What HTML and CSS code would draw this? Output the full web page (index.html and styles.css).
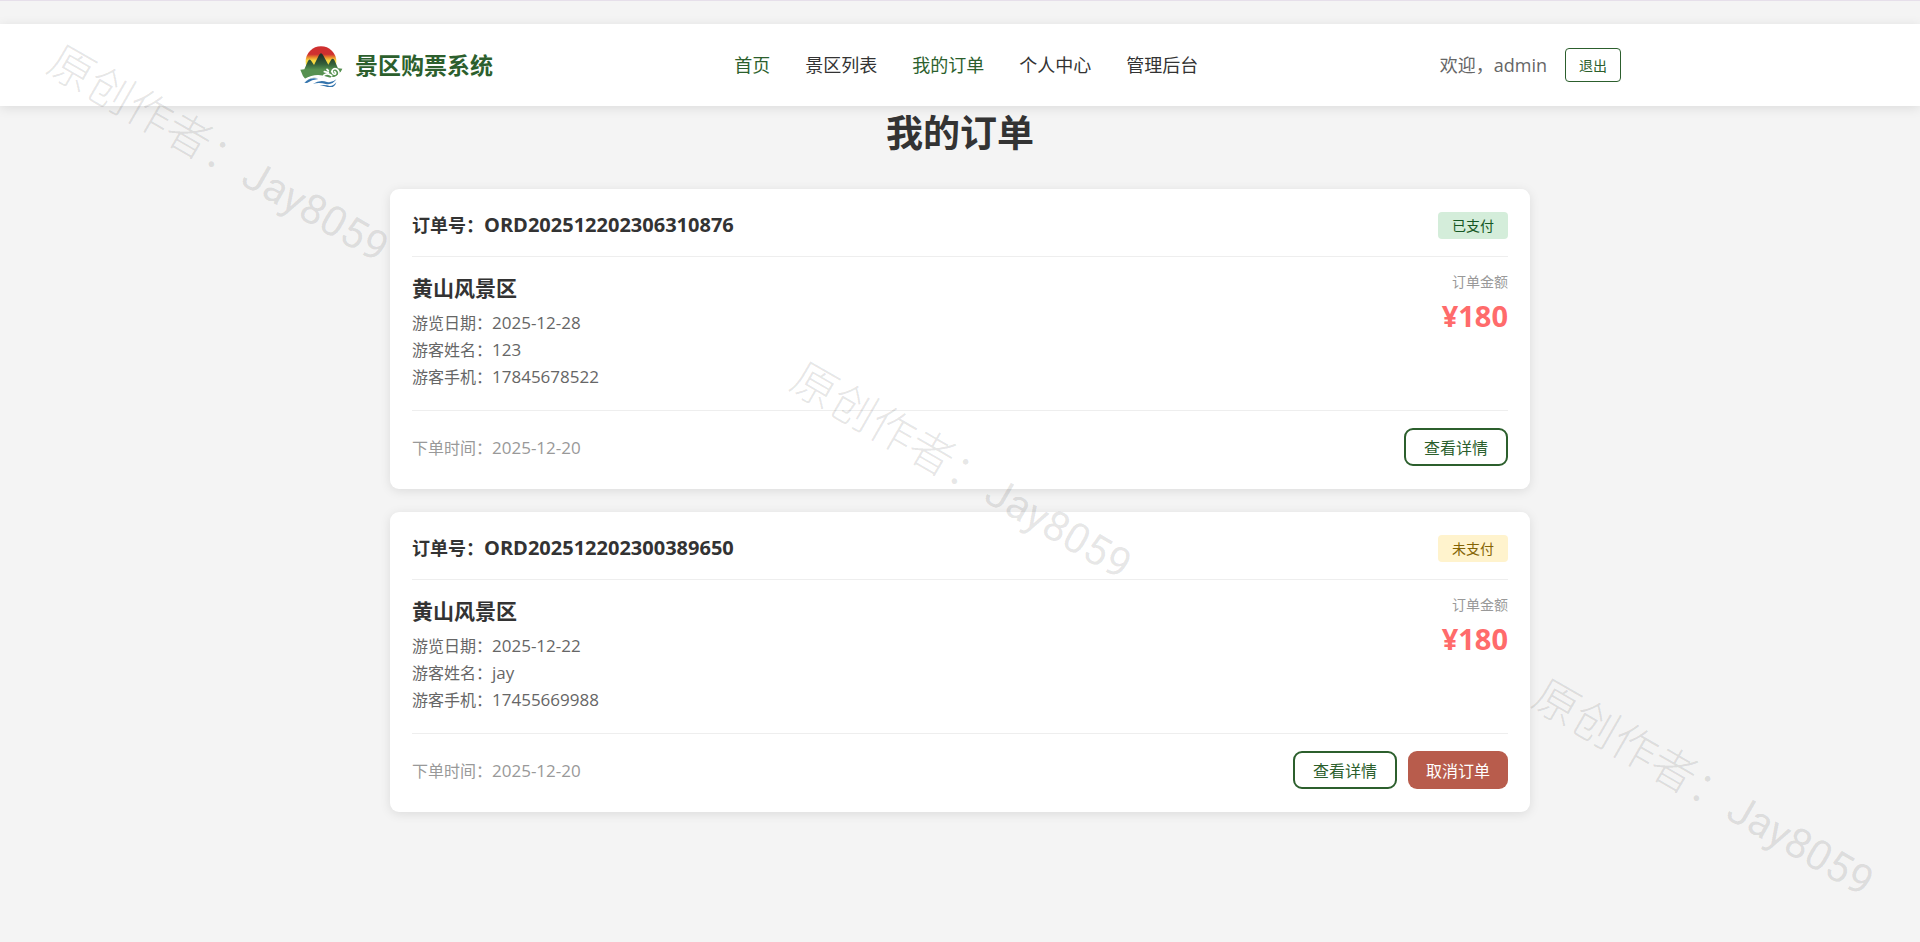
FILE: index.html
```html
<!DOCTYPE html>
<html lang="zh-CN">
<head>
  <meta charset="UTF-8" />
  <meta name="viewport" content="width=device-width, initial-scale=1.0" />
  <title>我的订单 - 景区购票系统</title>
  <link rel="stylesheet" href="styles.css">
</head>
<body>
  <header class="header">
    <div class="container header-content">
      <a class="logo" href="#">
        <svg class="logo-img" viewBox="-4 -10 132 132" aria-hidden="true">
          <defs>
            <linearGradient id="sun" x1="0" y1="0" x2="0" y2="1">
              <stop offset="0.26" stop-color="#cf3030" />
              <stop offset="0.36" stop-color="#e88a2c" />
              <stop offset="0.46" stop-color="#f7d842" />
            </linearGradient>
            <linearGradient id="hill" x1="0" y1="0" x2="0" y2="1">
              <stop offset="0.1" stop-color="#22352a" />
              <stop offset="0.4" stop-color="#34603a" />
              <stop offset="0.6" stop-color="#569150" />
            </linearGradient>
          </defs>
          <circle cx="62" cy="46" r="46" fill="url(#sun)" />
          <path d="M0 70 L12 69 L23 44 Q28 35 33 44 L41 56 L56 26 Q62 16 68 26 L84 55 L92 41 Q97 33 102 41 L113 66 L126 67 L118 84 Q102 104 78 96 Q48 84 18 102 Q6 90 0 70 Z" fill="url(#hill)" />
          <path d="M126 72 Q120 104 80 98 Q42 84 14 106 L12 98 Q46 78 80 91 Q100 98 112 86 Z" fill="#fff" />
          <path d="M70 87 Q82 78 94 88 M72 76 L84 79 M80 69 L84 73 M94 76 Q98 64 109 68 Q120 76 114 88 Q110 96 94 94 M96 76 Q97 86 105 83 Q108 79 103 76" fill="none" stroke="#fff" stroke-width="5" stroke-linecap="round" />
          <path d="M12 109 Q32 90 54 98 Q34 100 20 110 Z M38 112 Q60 99 80 107 Q96 110 108 99 Q96 117 76 113 Q58 107 38 112 Z M58 117 Q78 115 88 119 Q100 119 108 108 Q104 126 84 123 Q74 119 58 117 Z" fill="#3474ad" />
        </svg>
        <span class="logo-text">景区购票系统</span>
      </a>
      <nav class="nav">
        <a class="nav-link active" href="#">首页</a>
        <a class="nav-link" href="#">景区列表</a>
        <a class="nav-link active" href="#">我的订单</a>
        <a class="nav-link" href="#">个人中心</a>
        <a class="nav-link" href="#">管理后台</a>
      </nav>
      <div class="user-info">
        <span class="welcome">欢迎，admin</span>
        <button type="button" class="btn-logout">退出</button>
      </div>
    </div>
  </header>

  <main class="orders">
    <h1 class="page-title">我的订单</h1>

    <article class="order-card">
      <div class="order-header">
        <h2 class="order-no">订单号：<span class="order-id">ORD202512202306310876</span></h2>
        <span class="status paid">已支付</span>
      </div>
      <div class="order-body">
        <div class="order-info">
          <h3 class="scenic-name">黄山风景区</h3>
          <p>游览日期：<span class="value">2025-12-28</span></p>
          <p>游客姓名：<span class="value">123</span></p>
          <p>游客手机：<span class="value">17845678522</span></p>
        </div>
        <div class="order-amount">
          <span class="amount-label">订单金额</span>
          <span class="price">¥180</span>
        </div>
      </div>
      <div class="order-footer">
        <span class="order-time">下单时间：<span class="value">2025-12-20</span></span>
        <div class="actions">
          <button type="button" class="btn btn-outline">查看详情</button>
        </div>
      </div>
    </article>

    <article class="order-card">
      <div class="order-header">
        <h2 class="order-no">订单号：<span class="order-id">ORD202512202300389650</span></h2>
        <span class="status unpaid">未支付</span>
      </div>
      <div class="order-body">
        <div class="order-info">
          <h3 class="scenic-name">黄山风景区</h3>
          <p>游览日期：<span class="value">2025-12-22</span></p>
          <p>游客姓名：<span class="value">jay</span></p>
          <p>游客手机：<span class="value">17455669988</span></p>
        </div>
        <div class="order-amount">
          <span class="amount-label">订单金额</span>
          <span class="price">¥180</span>
        </div>
      </div>
      <div class="order-footer">
        <span class="order-time">下单时间：<span class="value">2025-12-20</span></span>
        <div class="actions">
          <button type="button" class="btn btn-outline">查看详情</button>
          <button type="button" class="btn btn-danger">取消订单</button>
        </div>
      </div>
    </article>
  </main>

  <!-- 水印 -->
  <div class="watermark wm-1">原创作者：<span class="wm-name">Jay8059</span></div>
  <div class="watermark wm-2">原创作者：<span class="wm-name">Jay8059</span></div>
  <div class="watermark wm-3">原创作者：<span class="wm-name">Jay8059</span></div>
</body>
</html>
```

FILE: styles.css
```css
* {
  margin: 0;
  padding: 0;
  box-sizing: border-box;
}
body {
  font-family: "Open Sans", "Noto Sans CJK SC", sans-serif;
  font-size: 16px;
  color: #333;
  background: #f4f4f4;
  border-top: 1px solid #e6dfea;
  min-height: 100vh;
  position: relative;
  overflow-x: hidden;
}
a {
  color: inherit;
  text-decoration: none;
}
button {
  font-family: inherit;
  cursor: pointer;
}

/* 顶部导航 */
.header {
  margin-top: 23px;
  padding: 19px 0;
  background: #fff;
  box-shadow: 0 2px 11px rgba(0, 0, 0, 0.1);
}
.container {
  max-width: 1322px;
  margin: 0 auto;
}
.header-content {
  display: flex;
  justify-content: space-between;
  align-items: center;
}
.logo {
  display: flex;
  align-items: center;
  gap: 12px;
  color: #2c5f2d;
}
.logo-img {
  width: 44px;
  height: 44px;
}
.logo-text {
  font-size: 23px;
  font-weight: bold;
  line-height: 44px;
}
.nav {
  display: flex;
  gap: 35px;
  font-size: 18px;
  line-height: 24px;
}
.nav-link.active {
  color: #2c5f2d;
}
.user-info {
  display: flex;
  align-items: center;
  gap: 18px;
}
.welcome {
  font-size: 18px;
  line-height: 24px;
  color: #666;
}
.btn-logout {
  height: 34px;
  padding: 0 13px;
  font-size: 14px;
  color: #2c5f2d;
  background: transparent;
  border: 1px solid #2c5f2d;
  border-radius: 4px;
}

/* 订单列表 */
.orders {
  max-width: 1140px;
  margin: 0 auto;
}
.page-title {
  margin-bottom: 29px;
  font-size: 37px;
  line-height: 54px;
  text-align: center;
}
.order-card {
  margin-bottom: 23px;
  padding: 22px 22px 23px;
  background: #fff;
  border-radius: 9px;
  box-shadow: 0 2px 11px rgba(0, 0, 0, 0.1);
}
.order-header {
  display: flex;
  justify-content: space-between;
  align-items: center;
  padding-bottom: 16px;
  border-bottom: 1px solid #eee;
}
.order-no {
  font-size: 18px;
  line-height: 29px;
}
.order-id {
  font-size: 20px;
  line-height: 1;
}
.status {
  padding: 0 14px;
  font-size: 14px;
  line-height: 27px;
  border-radius: 4px;
}
.paid {
  color: #155724;
  background: #d4edda;
}
.unpaid {
  color: #856404;
  background: #fff3cd;
}
.order-body {
  display: flex;
  justify-content: space-between;
  padding: 16px 0 19px;
}
.order-info {
  color: #666;
  line-height: 27px;
}
.scenic-name {
  margin-bottom: 7px;
  font-size: 21px;
  line-height: 30px;
  color: #333;
}
.value {
  font-size: 17px;
  line-height: 1;
}
.order-amount {
  display: flex;
  flex-direction: column;
  align-items: flex-end;
  gap: 4px;
}
.amount-label {
  font-size: 14px;
  line-height: 18px;
  color: #999;
}
.price {
  font-size: 29px;
  font-weight: bold;
  line-height: 42px;
  color: #ff6b6b;
}
.order-footer {
  display: flex;
  justify-content: space-between;
  align-items: center;
  padding-top: 17px;
  border-top: 1px solid #eee;
}
.order-time {
  color: #999;
}
.actions {
  display: flex;
  gap: 11px;
}
.btn {
  height: 38px;
  padding: 0 18px;
  font-size: 16px;
  border: none;
  border-radius: 9px;
}
.btn-outline {
  color: #2c5f2d;
  background: transparent;
  border: 2px solid #2c5f2d;
}
.btn-danger {
  color: #fff;
  background: #b85c4c;
}

/* 水印 */
.watermark {
  position: absolute;
  font-size: 45px;
  font-weight: 300;
  line-height: 48px;
  white-space: nowrap;
  color: rgba(0, 0, 0, 0.1);
  transform: rotate(30deg);
  transform-origin: 0 50%;
  pointer-events: none;
}
.wm-name {
  font-family: Roboto, sans-serif;
  font-size: 42px;
  font-weight: 400;
}
.wm-1 {
  left: 52px;
  top: 31px;
}
.wm-2 {
  left: 795px;
  top: 348px;
}
.wm-3 {
  left: 1537px;
  top: 665px;
}
```
